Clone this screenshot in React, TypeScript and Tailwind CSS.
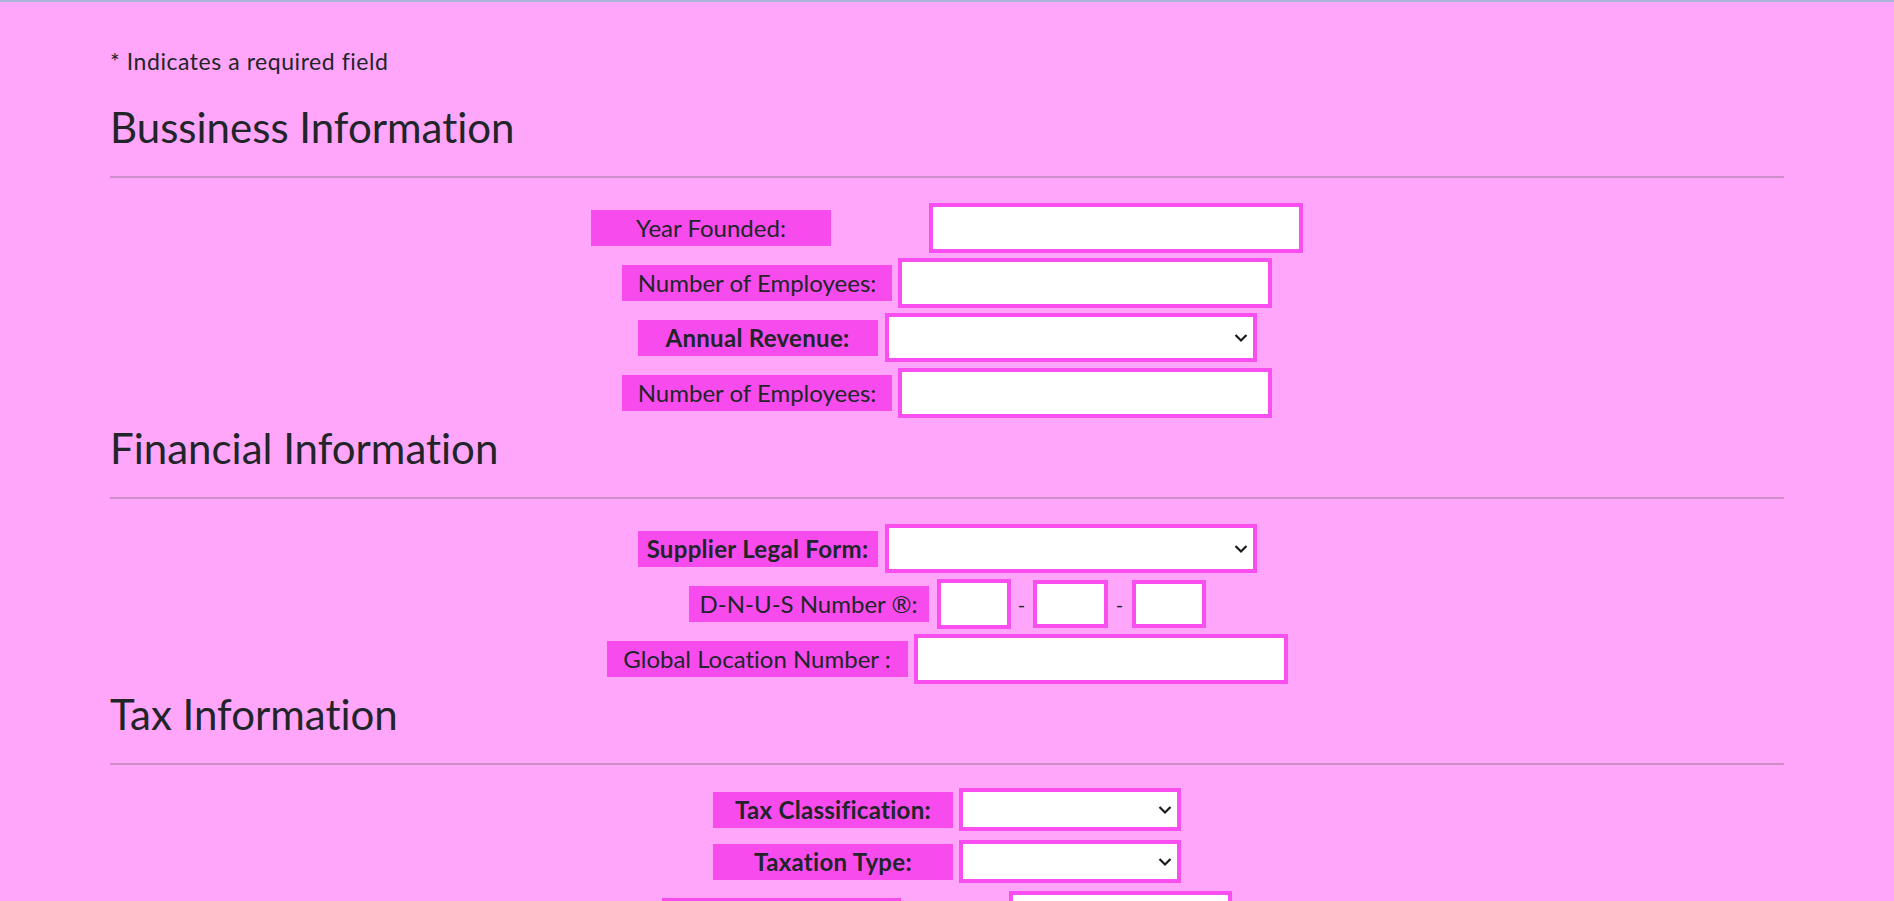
import React from "react";

function Label({ children, className = "" }: { children: React.ReactNode; className?: string }) {
  return (
    <span
      className={`flex h-[36px] shrink-0 items-center justify-center whitespace-nowrap bg-[#f74bee] text-[24px] leading-[36px] ${className}`}
    >
      {children}
    </span>
  );
}

function TextBox({ className = "" }: { className?: string }) {
  return (
    <input
      type="text"
      className={`shrink-0 border-4 border-[#f94ff0] bg-white outline-none ${className}`}
    />
  );
}

function SelectBox({ className = "" }: { className?: string }) {
  return (
    <div className="relative shrink-0">
      <select
        className={`block appearance-none border-4 border-[#f94ff0] bg-white outline-none ${className}`}
        defaultValue=""
      >
        <option value=""></option>
      </select>
      <svg
        className="pointer-events-none absolute right-[9px] top-1/2 -translate-y-1/2"
        width="14"
        height="9"
        viewBox="0 0 14 9"
        fill="none"
      >
        <path d="M1.5 1.5 L7 7 L12.5 1.5" stroke="#1a1a1a" strokeWidth="2.2" />
      </svg>
    </div>
  );
}

function SectionHeading({ title, className = "" }: { title: string; className?: string }) {
  return (
    <div className={className}>
      <h2 className="text-[42px] font-normal leading-[52px]">{title}</h2>
      <hr className="mt-[23px] border-0 border-t-2 border-[#cd8ecb]" />
    </div>
  );
}

export default function App() {
  return (
    <div className="min-h-screen bg-[#ffa6fb] font-['Segoe_UI',Lato,sans-serif] text-[#212529] [font-variant-ligatures:none]">
      <div className="h-[2px] bg-[#a9b5d6]" />
      <div className="mx-auto w-[1674px] pb-[60px] pt-[44px]">
        <p className="text-[23px] leading-[30px] tracking-[0.55px]">* Indicates a required field</p>

        {/* Business */}
        <SectionHeading title="Bussiness Information" className="mt-[25px]" />
        <div className="mt-[22px]">
          <div className="flex h-[55px] items-center justify-center">
            <Label className="w-[240px]">Year Founded:</Label>
            <TextBox className="ml-[98px] h-[50px] w-[374px]" />
          </div>
          <div className="flex h-[55px] items-center justify-center">
            <Label className="w-[270px]">Number of Employees:</Label>
            <TextBox className="ml-[6px] h-[50px] w-[374px]" />
          </div>
          <div className="flex h-[55px] items-center justify-center">
            <Label className="w-[240px] font-bold tracking-[0.3px]">Annual Revenue:</Label>
            <div className="ml-[7px]">
              <SelectBox className="h-[49px] w-[372px]" />
            </div>
          </div>
          <div className="flex h-[55px] items-center justify-center">
            <Label className="w-[270px]">Number of Employees:</Label>
            <TextBox className="ml-[6px] h-[50px] w-[374px]" />
          </div>
        </div>

        {/* Financial */}
        <SectionHeading title="Financial Information" className="mt-[2px]" />
        <div className="mt-[22px]">
          <div className="flex h-[55px] items-center justify-center">
            <Label className="w-[240px] font-bold tracking-[0.3px]">Supplier Legal Form:</Label>
            <div className="ml-[7px]">
              <SelectBox className="h-[49px] w-[372px]" />
            </div>
          </div>
          <div className="flex h-[55px] items-center justify-center">
            <Label className="w-[240px]">D-N-U-S Number ®:</Label>
            <TextBox className="ml-[8px] h-[50px] w-[74px]" />
            <span className="w-[22px] text-center text-[20px]">-</span>
            <TextBox className="h-[48px] w-[75px]" />
            <span className="w-[24px] text-center text-[20px]">-</span>
            <TextBox className="h-[48px] w-[74px]" />
          </div>
          <div className="flex h-[55px] items-center justify-center">
            <Label className="w-[301px]">Global Location Number :</Label>
            <TextBox className="ml-[6px] h-[50px] w-[374px]" />
          </div>
        </div>

        {/* Tax */}
        <SectionHeading title="Tax Information" className="mt-[2px]" />
        <div className="mt-[22px]">
          <div className="flex h-[45px] items-center justify-center">
            <Label className="w-[240px] font-bold tracking-[0.3px]">Tax Classification:</Label>
            <div className="ml-[6px]">
              <SelectBox className="h-[43px] w-[222px]" />
            </div>
          </div>
          <div className="mt-[7px] flex h-[45px] items-center justify-center">
            <Label className="w-[240px] font-bold tracking-[0.3px]">Taxation Type:</Label>
            <div className="ml-[6px]">
              <SelectBox className="h-[43px] w-[222px]" />
            </div>
          </div>
          <div className="mt-[4px] flex h-[55px] items-center justify-center">
            <Label className="w-[239px]">Tax ID Number:</Label>
            <TextBox className="ml-[108px] h-[50px] w-[223px]" />
          </div>
          <div className="flex h-[55px] items-center justify-center">
            <Label className="w-[239px]">VAT Number:</Label>
            <TextBox className="ml-[108px] h-[50px] w-[223px]" />
          </div>
        </div>
      </div>
    </div>
  );
}
